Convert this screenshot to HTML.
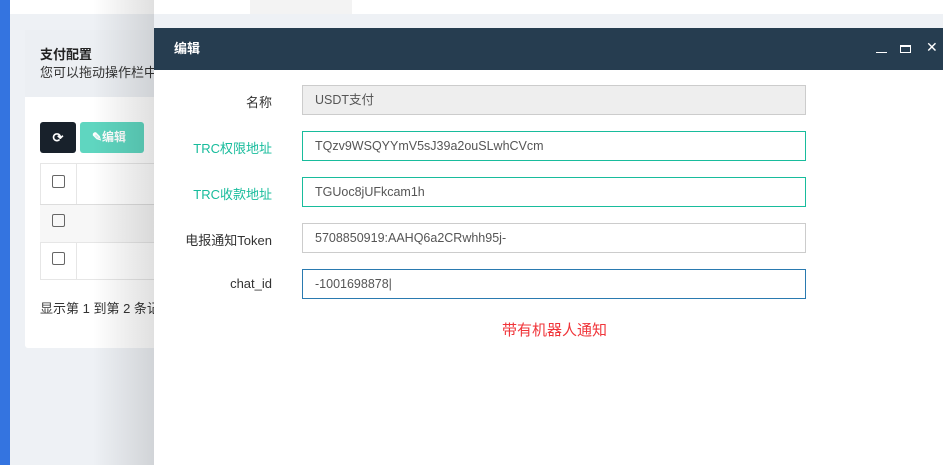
<!DOCTYPE html>
<html><head><meta charset="utf-8"><style>
*{box-sizing:border-box;margin:0;padding:0}
body{width:943px;height:465px;overflow:hidden;position:relative;background:#eef1f5;font-family:"Liberation Sans","Noto Sans CJK SC",sans-serif;font-size:13px;color:#333}
.abs{position:absolute;white-space:nowrap}
.shade{position:absolute;left:0;top:0;width:154px;height:465px;background:linear-gradient(to right,rgba(0,0,0,0) 60%,rgba(0,0,0,.12) 100%);z-index:5}
.lab{position:absolute;width:130px;left:142px;text-align:right;font-size:13px;color:#333;white-space:nowrap}
.inp{position:absolute;left:302px;width:504px;height:30px;border:1px solid #ccc;padding-left:12px;line-height:28px;font-size:12.5px;color:#555;background:#fff;white-space:nowrap}
</style></head><body>
<div class="abs" style="left:0;top:0;width:10px;height:465px;background:#3474e0"></div>
<div class="abs" style="left:10px;top:0;width:933px;height:14px;background:#fff"></div>
<div class="abs" style="left:250px;top:0;width:102px;height:14px;background:#f3f3f3"></div>
<div class="abs" style="left:25px;top:30px;width:140px;height:318px;background:#fff;border-radius:3px"></div>
<div class="abs" style="left:25px;top:30px;width:140px;height:67px;background:#eceff3"></div>
<div class="abs" style="left:40px;top:44px;font-weight:bold;font-size:13px;color:#222">支付配置</div>
<div class="abs" style="left:40px;top:62px;font-size:13px;color:#333">您可以拖动操作栏中</div>
<div class="abs" style="left:40px;top:122px;width:36px;height:31px;background:#18212b;border-radius:3px;color:#fff;text-align:center;line-height:31px;font-weight:bold">⟳</div>
<div class="abs" style="left:80px;top:122px;width:64px;height:31px;background:#5fd6c0;border-radius:3px;color:#fff;line-height:31px;padding-left:12px;font-weight:bold;font-size:12px">✎编辑</div>
<div class="abs" style="left:40px;top:163px;width:125px;height:117px;border:1px solid #e6e6e6"></div>
<div class="abs" style="left:76px;top:163px;width:1px;height:117px;background:#e6e6e6"></div>
<div class="abs" style="left:40px;top:204px;width:125px;height:38px;background:#f7f7f7;border-top:1px solid #ddd"></div>
<div class="abs" style="left:40px;top:242px;width:125px;height:1px;background:#e6e6e6"></div>
<div class="abs" style="left:52px;top:175px;width:13px;height:13px;border:1px solid #666;border-radius:2px"></div>
<div class="abs" style="left:52px;top:214px;width:13px;height:13px;border:1px solid #666;border-radius:2px"></div>
<div class="abs" style="left:52px;top:252px;width:13px;height:13px;border:1px solid #666;border-radius:2px"></div>
<div class="abs" style="left:40px;top:298px;font-size:13px">显示第 1 到第 2 条记</div>
<div class="shade"></div>
<div class="abs" style="left:154px;top:28px;width:789px;height:437px;background:#fff;z-index:6">
<div style="height:42px;background:#263d50;color:#fff;font-weight:bold;font-size:13px;line-height:42px;padding-left:20px">编辑</div>
<div class="abs" style="left:722px;top:24px;width:11px;height:1px;background:#fff"></div>
<div class="abs" style="left:746px;top:17px;width:11px;height:8px;border:1px solid #fff;border-top-width:2px"></div>
<div class="abs" style="left:772px;top:11px;color:#fff;font-size:14px">✕</div>
</div>
<div style="position:absolute;left:0;top:0;z-index:7">
<div class="lab" style="top:92px">名称</div>
<div class="inp" style="top:85px;background:#eee">USDT支付</div>
<div class="lab" style="top:138px;color:#18bc9c">TRC权限地址</div>
<div class="inp" style="top:131px;border-color:#18bc9c">TQzv9WSQYYmV5sJ39a2ouSLwhCVcm</div>
<div class="lab" style="top:184px;color:#18bc9c">TRC收款地址</div>
<div class="inp" style="top:177px;border-color:#18bc9c">TGUoc8jUFkcam1h</div>
<div class="lab" style="top:230px">电报通知Token</div>
<div class="inp" style="top:223px">5708850919:AAHQ6a2CRwhh95j-</div>
<div class="lab" style="top:276px">chat_id</div>
<div class="inp" style="top:269px;border-color:#2a7ab0">-1001698878|</div>
<div class="abs" style="left:502px;top:319px;color:#f0353a;font-size:15px">带有机器人通知</div>
</div>
</body></html>
